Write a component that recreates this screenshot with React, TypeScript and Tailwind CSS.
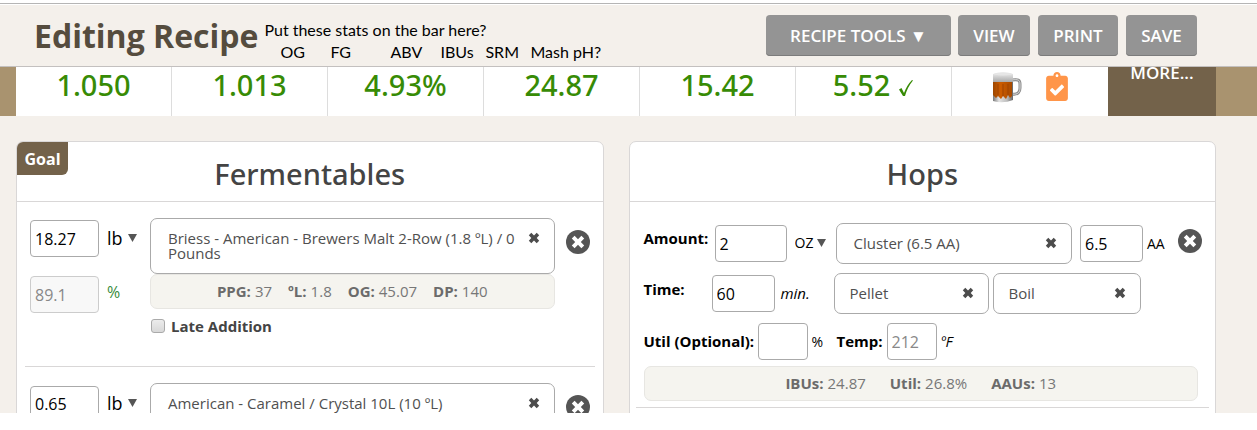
import type { ReactNode } from "react";
import { FaClipboardCheck } from "react-icons/fa";

const stats = ["1.050", "1.013", "4.93%", "24.87", "15.42"];

function CrossIcon() {
  return (
    <svg viewBox="0 0 12 12" className="size-3" aria-hidden="true">
      <path
        d="M3.300 .8 6 3.500 8.700 .8 11.200 3.300 8.700 6l2.500 2.700L8.700 11.200 6 8.500 3.300 11.200.8 8.700 3.300 6 .8 3.300z"
        fill="#4c4c4c"
      />
    </svg>
  );
}

function RemoveButton({ label }: { label: string }) {
  return (
    <button type="button" aria-label={label} className="size-6 shrink-0">
      <svg viewBox="0 0 24 24" className="size-6" aria-hidden="true">
        <circle cx="12" cy="12" r="12" fill="#555" />
        <path
          d="M8.6 5.8 12 9.2l3.4-3.4 2.8 2.8-3.4 3.4 3.4 3.4-2.8 2.8-3.4-3.4-3.4 3.4-2.8-2.8L9.2 12 5.800 8.600z"
          fill="#fff"
        />
      </svg>
    </button>
  );
}

function BeerMug() {
  return (
    <svg viewBox="0 0 30 32" className="h-8 w-[30px]" role="img" aria-label="Beer color">
      <defs>
        <linearGradient id="glass" x1="0" x2="1">
          <stop offset="0" stopColor="#777" />
          <stop offset="0.3" stopColor="#e4e4e4" />
          <stop offset="0.7" stopColor="#bdbdbd" />
          <stop offset="1" stopColor="#666" />
        </linearGradient>
        <linearGradient id="foam" x1="0" x2="0" y1="0" y2="1">
          <stop offset="0" stopColor="#f4f4f4" />
          <stop offset="1" stopColor="#a8a8a8" />
        </linearGradient>
        <linearGradient id="beer" x1="0" x2="1">
          <stop offset="0" stopColor="#9c4600" />
          <stop offset="0.4" stopColor="#cc5c00" />
          <stop offset="1" stopColor="#a84a00" />
        </linearGradient>
      </defs>
      <path d="M20 9c6-1 8 0 8 4v4c0 4-2 7-8 6" fill="none" stroke="#8a8a8a" strokeWidth="3" />
      <path d="M20 9c6-1 8 0 8 4v4c0 4-2 7-8 6" fill="none" stroke="#d8d8d8" strokeWidth="1" />
      <path d="M1 3h20v26q-10 4-20 1z" fill="url(#glass)" />
      <path d="M1 11h19v14l-2 2-2-3-2 4-3-3-2 3-3-3-2 2-3-3z" fill="url(#beer)" />
      <path d="M6 13v11M11 13v12M16 13v11" stroke="#a04300" strokeWidth="1" />
      <path d="M1 3q10-4 20 0v8H1z" fill="url(#foam)" />
      <ellipse cx="11" cy="3" rx="9" ry="1.500" fill="#e6e6e6" />
    </svg>
  );
}

function BarButton({ children, className }: { children: ReactNode; className: string }) {
  return (
    <button
      type="button"
      className={`h-[41px] rounded bg-[#949494] text-[17px] font-semibold text-white shadow-[inset_0_-1px_0_#7c7c7c] ${className}`}
    >
      {children}
    </button>
  );
}

function Picker({ children, className }: { children: ReactNode; className: string }) {
  return (
    <div
      className={`flex items-start rounded-[7px] border border-[#aaa] pt-3 pr-3.5 pb-3 text-[15px] leading-[15px] text-[#505050] ${className}`}
    >
      <button type="button" aria-haspopup="listbox" className="min-w-0 flex-1 text-left">
        {children}
      </button>
      <button type="button" aria-label="Clear selection" className="mt-px">
        <CrossIcon />
      </button>
    </div>
  );
}

function NumberBox({ label, value, className }: { label: string; value: string; className: string }) {
  return (
    <input
      type="text"
      aria-label={label}
      defaultValue={value}
      className={`h-[37px] shrink-0 rounded border border-[#aaa] bg-white px-1 text-base text-black ${className}`}
    />
  );
}

function UnitSelect({ unit, className }: { unit: string; className: string }) {
  return (
    <div className={`flex items-center ${className}`}>
      <select aria-label="Unit" defaultValue={unit} className="appearance-none">
        <option>{unit}</option>
      </select>
      <svg viewBox="0 0 9 8" className="h-2 w-[9px]" aria-hidden="true">
        <path d="M0 0h9L4.500 8z" fill="#555" />
      </svg>
    </div>
  );
}

function Readout({ items, className }: { items: [string, string][]; className: string }) {
  return (
    <dl
      className={`flex h-[35px] items-center justify-center rounded-[7px] border border-[#e7e6e2] bg-[#f5f4ef] text-[15px] text-[#777] ${className}`}
    >
      {items.map(([name, value]) => (
        <div key={name} className="flex gap-1">
          <dt className="font-bold text-[#6b6b6b]">{name}:</dt>
          <dd>{value}</dd>
        </div>
      ))}
    </dl>
  );
}

function Panel({ title, children }: { title: string; children: ReactNode }) {
  return (
    <section className="relative rounded-t-[7px] border border-[#d9d7d7] bg-white">
      <h2 className="flex h-[60px] items-center justify-center border-b border-[#d9d7d7] pt-1 font-['Noto_Sans','Open_Sans',sans-serif] text-[29px] font-medium text-[#444]">
        {title}
      </h2>
      {children}
    </section>
  );
}

export default function App() {
  return (
    <div className="flex h-screen flex-col bg-white pb-[17px] font-['Open_Sans',sans-serif] text-black">
      <div className="flex min-h-0 flex-1 flex-col overflow-hidden bg-[#f4f0eb]">
        <div className="h-[5px] shrink-0 border-b border-white bg-white pt-[3px]">
          <div className="h-px bg-[#b5b5b5]" />
        </div>
        <header className="flex h-[62px] shrink-0 items-start border-b border-[#c3c0bf] pr-[60px] pl-[34px]">
          <h1 className="pt-2 text-[32px] leading-[46px] font-bold whitespace-nowrap text-[#554c3e]">
            Editing Recipe
          </h1>
          <div className="ml-1.5 pt-3.5 font-[Lato,sans-serif] text-base leading-[22px] whitespace-nowrap">
            <p>Put these stats on the bar here?</p>
            <ul className="flex pl-4">
              <li className="w-[50px]">OG</li>
              <li className="w-[60px]">FG</li>
              <li className="w-[50px]">ABV</li>
              <li className="w-[45px]">IBUs</li>
              <li className="w-[45px]">SRM</li>
              <li>Mash pH?</li>
            </ul>
          </div>
          <div className="ml-auto flex shrink-0 gap-2 pt-2.5">
            <BarButton className="mr-[-1px] w-[185px]">RECIPE TOOLS ▼</BarButton>
            <BarButton className="w-[72px]">VIEW</BarButton>
            <BarButton className="w-20">PRINT</BarButton>
            <BarButton className="w-[71px]">SAVE</BarButton>
          </div>
        </header>

        <div className="shrink-0 bg-[#a9936f] pr-[41px] pl-4">
          <div className="grid h-[49px] grid-cols-[repeat(7,156fr)_108fr] overflow-hidden bg-white font-['Noto_Sans','Open_Sans',sans-serif] text-[29px] leading-9 font-medium text-[#378b05]">
            {stats.map((value) => (
              <div key={value} className="border-r border-[#ddd] text-center">
                {value}
              </div>
            ))}
            <div className="flex justify-center gap-2 border-r border-[#ddd]">
              5.52
              <svg viewBox="0 0 16 18" className="mt-3 h-[18px] w-4" aria-hidden="true">
                <path d="M1 10.500 3.500 9 6 14Q9 6 14 1l1 .5Q9.500 8 7 17H5z" fill="#378b05" />
              </svg>
            </div>
            <div className="flex items-start justify-center gap-6 pt-1">
              <BeerMug />
              <FaClipboardCheck className="mt-px h-[29px] w-[22px] text-[#ff9549]" />
            </div>
            <button
              type="button"
              className="flex items-start justify-center bg-[#73624a] font-['Open_Sans',sans-serif] text-[17px] leading-3 font-semibold text-white"
            >
              MORE...
            </button>
          </div>
        </div>

        <main className="grid shrink-0 grid-cols-2 gap-[25px] pt-[25px] pr-[41px] pl-4">
          <Panel title="Fermentables">
            <button
              type="button"
              className="absolute top-0 left-0 h-[33px] w-[51px] rounded-tl-md rounded-br-md bg-[#73624a] text-base font-bold text-white"
            >
              Goal
            </button>
            <div className="flex items-start gap-[11px] px-[13px] pt-4 pb-7">
              <div className="flex w-[109px] shrink-0 flex-col gap-[19px] pt-0.5">
                <div className="flex items-center gap-2">
                  <NumberBox label="Amount" value="18.27" className="w-[69px]" />
                  <UnitSelect unit="lb" className="gap-[5px] pb-0.5 text-lg" />
                </div>
                <div className="flex items-start gap-2">
                  <input
                    type="text"
                    aria-label="Percent"
                    defaultValue="89.1"
                    disabled
                    className="h-[37px] w-[69px] rounded border border-[#ccc] bg-[#f8f8f8] px-1 text-base text-[#888]"
                  />
                  <span className="pt-1 text-base text-[#378b3a]">%</span>
                </div>
              </div>
              <div className="min-w-0 flex-1">
                <Picker className="pl-[17px]">
                  Briess - American - Brewers Malt 2-Row (1.8 ºL) / 0 Pounds
                </Picker>
                <Readout
                  className="gap-4"
                  items={[
                    ["PPG", "37"],
                    ["ºL", "1.8"],
                    ["OG", "45.07"],
                    ["DP", "140"],
                  ]}
                />
                <label className="mt-1.5 flex items-center gap-1.5 text-[15px] font-bold text-[#444]">
                  <input
                    type="checkbox"
                    className="ml-px size-3.5 appearance-none rounded-[3px] border border-[#aaa] bg-linear-to-b from-[#ececec] to-[#d8d8d8] checked:bg-[#73624a]"
                  />
                  Late Addition
                </label>
              </div>
              <div className="pt-3">
                <RemoveButton label="Remove fermentable" />
              </div>
            </div>
            <hr className="mx-2 border-[#d9d7d7]" />
            <div className="flex items-start gap-[11px] px-[13px] pt-4 pb-8">
              <div className="flex w-[109px] shrink-0 items-center gap-2 pt-[3px]">
                <NumberBox label="Amount" value="0.65" className="w-[69px]" />
                <UnitSelect unit="lb" className="gap-[5px] pb-0.5 text-lg" />
              </div>
              <Picker className="min-w-0 flex-1 pl-[17px]">American - Caramel / Crystal 10L (10 ºL)</Picker>
              <div className="pt-3">
                <RemoveButton label="Remove fermentable" />
              </div>
            </div>
          </Panel>

          <Panel title="Hops">
            <div className="pt-[21px] pr-[17px] pl-3.5">
              <div className="flex items-center pb-[9px] text-[15px]">
                <label htmlFor="hop-amount" className="w-[71px] pb-2.5 font-bold">
                  Amount:
                </label>
                <input
                  id="hop-amount"
                  type="text"
                  defaultValue="2"
                  className="h-[37px] w-[72px] shrink-0 rounded border border-[#aaa] px-1 text-base"
                />
                <div className="ml-2 w-[41px]">
                  <UnitSelect unit="OZ" className="gap-[3px] pb-0.5 text-sm" />
                </div>
                <Picker className="min-w-0 flex-1 pl-[17px]">Cluster (6.5 AA)</Picker>
                <NumberBox label="Alpha acid" value="6.5" className="ml-2 w-[63px]" />
                <span className="ml-1 w-[31px] text-sm">AA</span>
                <div className="-mr-1">
                  <RemoveButton label="Remove hop" />
                </div>
              </div>
              <div className="flex items-center pb-[9px] text-[15px]">
                <label htmlFor="hop-time" className="w-[68px] pb-2 font-bold">
                  Time:
                </label>
                <input
                  id="hop-time"
                  type="text"
                  defaultValue="60"
                  className="h-[37px] w-[63px] shrink-0 rounded border border-[#aaa] px-1 text-base"
                />
                <em className="ml-1.5 w-[53px]">min.</em>
                <Picker className="w-[155px] pl-[15px]">Pellet</Picker>
                <Picker className="ml-1 w-[148px] pl-[15px]">Boil</Picker>
              </div>
              <div className="flex items-center pb-1.5 text-[15px]">
                <label htmlFor="util" className="w-[114px] font-bold whitespace-nowrap">
                  Util (Optional):
                </label>
                <input id="util" type="text" className="h-[37px] w-[50px] rounded border border-[#aaa] px-1" />
                <span className="ml-1 w-[25px] text-sm">%</span>
                <label htmlFor="temp" className="w-[50px] font-bold">
                  Temp:
                </label>
                <input
                  id="temp"
                  type="text"
                  placeholder="212"
                  className="h-[37px] w-[50px] rounded border border-[#aaa] px-1 text-base placeholder:text-[#888]"
                />
                <em className="ml-1 text-[15px]">ºF</em>
              </div>
              <Readout
                className="gap-6"
                items={[
                  ["IBUs", "24.87"],
                  ["Util", "26.8%"],
                  ["AAUs", "13"],
                ]}
              />
            </div>
            <hr className="mx-1.5 mt-1.5 border-[#d9d7d7]" />
          </Panel>
        </main>
      </div>
    </div>
  );
}
